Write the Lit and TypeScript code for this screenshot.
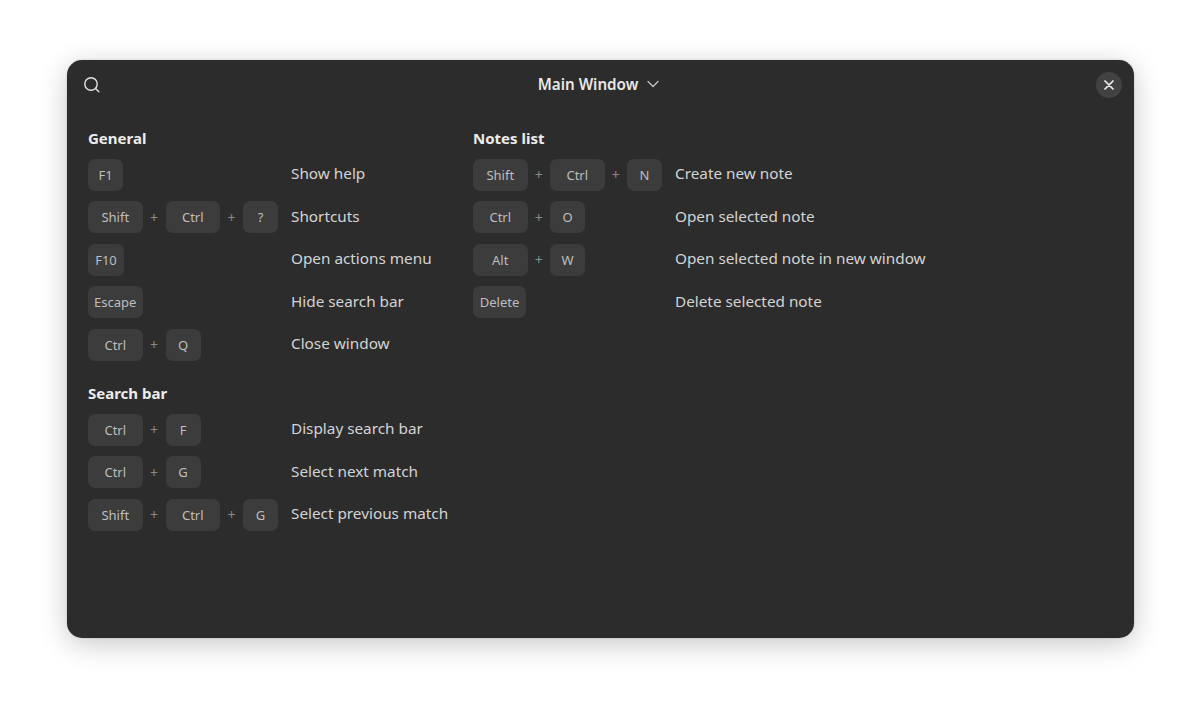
import { LitElement, html, css } from "lit";
import { customElement } from "lit/decorators.js";

type Row = { keys: string[]; label: string };
type Section = { title: string; rows: Row[] };

const col1: Section[] = [
  {
    title: "General",
    rows: [
      { keys: ["F1"], label: "Show help" },
      { keys: ["Shift", "Ctrl", "?"], label: "Shortcuts" },
      { keys: ["F10"], label: "Open actions menu" },
      { keys: ["Escape"], label: "Hide search bar" },
      { keys: ["Ctrl", "Q"], label: "Close window" },
    ],
  },
  {
    title: "Search bar",
    rows: [
      { keys: ["Ctrl", "F"], label: "Display search bar" },
      { keys: ["Ctrl", "G"], label: "Select next match" },
      { keys: ["Shift", "Ctrl", "G"], label: "Select previous match" },
    ],
  },
];

const col2: Section[] = [
  {
    title: "Notes list",
    rows: [
      { keys: ["Shift", "Ctrl", "N"], label: "Create new note" },
      { keys: ["Ctrl", "O"], label: "Open selected note" },
      { keys: ["Alt", "W"], label: "Open selected note in new window" },
      { keys: ["Delete"], label: "Delete selected note" },
    ],
  },
];

@customElement("app-root")
export class AppRoot extends LitElement {
  static styles = css`
    :host {
      display: block;
      height: 711px;
      background: #fff;
      padding: 60px 66px 73px 67px;
      box-sizing: border-box;
      font-family: "Noto Sans", "Open Sans", sans-serif;
    }
    .window {
      height: 578px;
      background: #2c2c2c;
      border-radius: 15px;
      box-shadow: 0 0 0 1px rgba(0, 0, 0, 0.06), 0 6px 28px rgba(0, 0, 0, 0.22);
      color: #dcdcdc;
      display: flex;
      flex-direction: column;
    }
    .header {
      height: 49px;
      display: flex;
      align-items: center;
      justify-content: space-between;
      padding: 0 12px 0 16px;
    }
    .side {
      width: 22px;
      display: flex;
      align-items: center;
    }
    .side.end {
      width: 26px;
      justify-content: flex-end;
    }
    .title {
      display: flex;
      align-items: center;
      gap: 9px;
      font-size: 15.2px;
      font-weight: 600;
      color: #e8e8e8;
      line-height: 20px;
      margin: 0 4px 2px 0;
    }
    .close {
      width: 26px;
      height: 26px;
      border-radius: 50%;
      background: #424242;
      display: flex;
      align-items: center;
      justify-content: center;
    }
    svg {
      display: block;
    }
    .columns {
      display: flex;
      padding: 18.5px 0 0 21px;
    }
    .column {
      display: flex;
      flex-direction: column;
      gap: 22px;
    }
    .column.first {
      width: 385px;
    }
    .section-title {
      font-size: 15px;
      font-weight: 700;
      color: #ececec;
      line-height: 20px;
      margin-bottom: 11px;
    }
    .rows {
      display: flex;
      flex-direction: column;
      gap: 10.5px;
    }
    .row {
      display: flex;
      align-items: center;
      height: 32px;
    }
    .keys {
      width: 203px;
      display: flex;
      align-items: center;
      flex-shrink: 0;
    }
    .column.second .keys {
      width: 202px;
    }
    .key {
      height: 32px;
      width: 35px;
      border-radius: 7px;
      background: #3c3c3c;
      color: #bebebe;
      font-size: 13px;
      display: flex;
      align-items: center;
      justify-content: center;
      flex-shrink: 0;
    }
    .key.wide {
      width: 54.5px;
    }
    .key.mid {
      width: 53px;
    }
    .key.f10 {
      width: 36px;
    }
    .plus {
      width: 23px;
      text-align: center;
      color: #8a8a8a;
      font-size: 14px;
    }
    .column.second .plus {
      width: 22.5px;
    }
    .label {
      font-size: 15.3px;
      color: #d4d4d4;
      line-height: 20px;
      white-space: nowrap;
      position: relative;
      top: -1.5px;
    }
  `;

  private keyClass(k: string) {
    if (k === "Delete") return "key mid";
    if (k === "F10") return "key f10";
    return k.length >= 3 ? "key wide" : "key";
  }

  private section(s: Section) {
    return html`<section>
      <div class="section-title">${s.title}</div>
      <div class="rows">
        ${s.rows.map(
          (r) => html`<div class="row">
            <div class="keys">
              ${r.keys.map(
                (k, i) => html`${i > 0 ? html`<span class="plus">+</span>` : ""}<span class=${this.keyClass(k)}>${k}</span>`
              )}
            </div>
            <div class="label">${r.label}</div>
          </div>`
        )}
      </div>
    </section>`;
  }

  render() {
    return html`<div class="window">
      <div class="header">
        <div class="side">
          <svg width="18" height="18" viewBox="0 0 18 18" fill="none" stroke="#e4e4e4" stroke-width="1.4" stroke-linecap="round">
            <circle cx="8" cy="8" r="6.2"></circle>
            <path d="M12.6 12.6 L15.8 15.8"></path>
          </svg>
        </div>
        <div class="title">
          Main Window
          <svg width="12" height="8" viewBox="0 0 12 8" fill="none" stroke="#c8c8c8" stroke-width="1.2" stroke-linecap="round" stroke-linejoin="round">
            <path d="M1 1.5 L6 6.5 L11 1.5"></path>
          </svg>
        </div>
        <div class="side end">
          <div class="close">
            <svg width="10" height="10" viewBox="0 0 10 10" fill="none" stroke="#f0f0f0" stroke-width="1.7" stroke-linecap="round">
              <path d="M1 1 L9 9 M9 1 L1 9"></path>
            </svg>
          </div>
        </div>
      </div>
      <div class="columns">
        <div class="column first">${col1.map((s) => this.section(s))}</div>
        <div class="column second">${col2.map((s) => this.section(s))}</div>
      </div>
    </div>`;
  }
}
